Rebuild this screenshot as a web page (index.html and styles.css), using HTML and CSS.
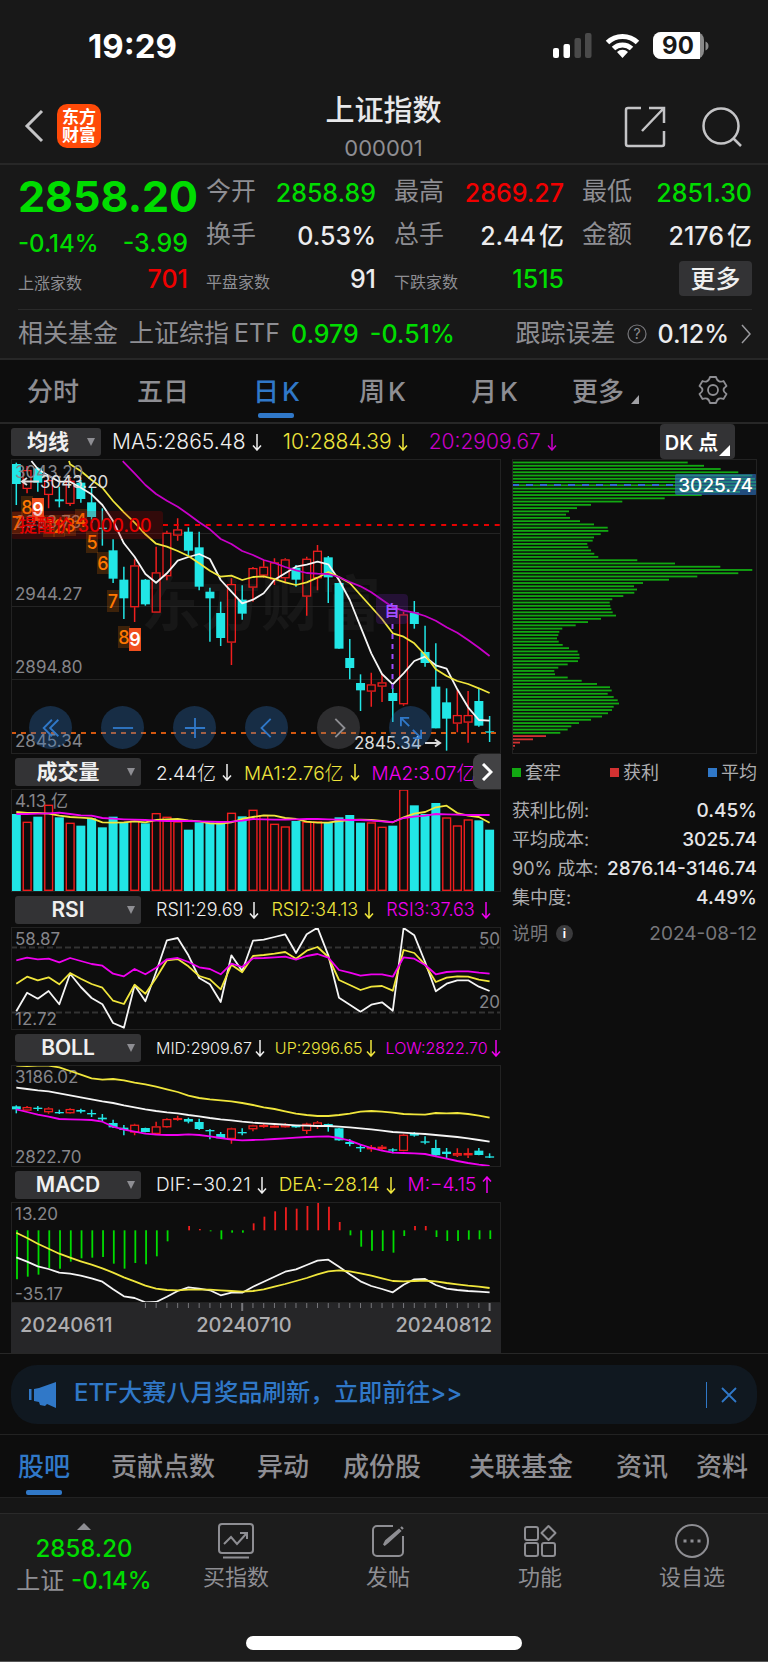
FILE: index.html
```html
<!DOCTYPE html>
<html lang="zh-CN">
<head>
  <meta charset="UTF-8">
  <meta name="viewport" content="width=device-width, initial-scale=1.0">
  <title>上证指数 000001</title>
  <link rel="stylesheet" href="styles.css">
</head>
<body>

  <svg class="defs" aria-hidden="true">
    <symbol id="down" viewBox="0 0 10 18"><path d="M5 1v16M1 12.5l4 4.5 4-4.5" fill="none" stroke="currentColor" stroke-width="1.5"/></symbol>
    <symbol id="up" viewBox="0 0 10 18"><path d="M5 17V1M1 5.5L5 1l4 4.5" fill="none" stroke="currentColor" stroke-width="1.5"/></symbol>
  </svg>

  <div class="status">
    <span class="time">19:29</span>
    <svg class="status-icons" viewBox="0 0 160 28" width="160" height="28">
      <rect x="1" y="16" width="6" height="10" rx="2" fill="#fff"/>
      <rect x="11.5" y="12" width="6.5" height="14" rx="2" fill="#fff"/>
      <rect x="22.5" y="6" width="6.5" height="20" rx="2" fill="#4a4a4a"/>
      <rect x="33" y="1" width="6.5" height="25" rx="2" fill="#4a4a4a"/>
      <g fill="none" stroke="#fff" stroke-width="5">
        <path d="M55.5 10.5a21.5 21.5 0 0 1 30 0"/>
        <path d="M61.5 16.5a13 13 0 0 1 18 0"/>
      </g>
      <path d="M70.5 26l-5.5-6a8 8 0 0 1 11 0z" fill="#fff"/>
      <rect x="101" y="0" width="51" height="27" rx="8" fill="#8a8a8a"/>
      <path d="M109 0h39v27h-39a8 8 0 0 1-8-8V8a8 8 0 0 1 8-8z" fill="#fff"/>
      <path d="M153.5 9.5c4 1 4 8 0 9z" fill="#8a8a8a"/>
      <text x="126" y="22" class="battery">90</text>
    </svg>
  </div>

  <header class="header">
    <div class="header-side">
      <button class="icon-btn" aria-label="返回">
        <svg viewBox="0 0 20 34" width="20" height="34"><path d="M18 2L3 17l15 15" fill="none" stroke="#c4c4c6" stroke-width="3"/></svg>
      </button>
      <a class="logo" href="#">东方<br>财富</a>
    </div>
    <div class="header-title">
      <h1>上证指数</h1>
      <p>000001</p>
    </div>
    <div class="header-side header-right">
      <button class="icon-btn" aria-label="分享">
        <svg viewBox="0 0 42 42" width="42" height="42" fill="none" stroke="#c4c4c6" stroke-width="2.5"><path d="M17 2H4a2 2 0 0 0-2 2v34a2 2 0 0 0 2 2h34a2 2 0 0 0 2-2V25M25 2h15v15M40 2L18 25"/></svg>
      </button>
      <button class="icon-btn" aria-label="搜索">
        <svg viewBox="0 0 42 42" width="42" height="42" fill="none" stroke="#c4c4c6" stroke-width="2.5"><circle cx="20" cy="20" r="17.5"/><path d="M32 32l8 8"/></svg>
      </button>
    </div>
  </header>

  <section class="quote">
    <div class="quote-grid">
      <div class="quote-main">
        <strong class="price green">2858.20</strong>
        <div class="change green"><span class="pct">-0.14%</span><span>-3.99</span></div>
        <div class="cell small"><span>上涨家数</span><b class="red">701</b></div>
      </div>
      <div class="quote-col">
        <div class="cell"><span>今开</span><b class="green">2858.89</b></div>
        <div class="cell"><span>换手</span><b>0.53%</b></div>
        <div class="cell small"><span>平盘家数</span><b>91</b></div>
      </div>
      <div class="quote-col">
        <div class="cell"><span>最高</span><b class="red">2869.27</b></div>
        <div class="cell"><span>总手</span><b>2.44<i>亿</i></b></div>
        <div class="cell small"><span>下跌家数</span><b class="green">1515</b></div>
      </div>
      <div class="quote-col">
        <div class="cell"><span>最低</span><b class="green">2851.30</b></div>
        <div class="cell"><span>金额</span><b>2176<i>亿</i></b></div>
        <div class="cell cell-more"><button class="more">更多</button></div>
      </div>
    </div>
    <a class="fund" href="#">
      <span>相关基金</span>
      <span>上证综指<i>ETF</i></span>
      <b class="green">0.979</b>
      <b class="green">-0.51%</b>
      <span class="fund-err">跟踪误差</span>
      <svg viewBox="0 0 20 20" width="20" height="20"><circle cx="10" cy="10" r="9" fill="none" stroke="#77777b" stroke-width="1.2"/><text x="10" y="15" class="q">?</text></svg>
      <b>0.12%</b>
      <svg viewBox="0 0 12 20" width="12" height="20"><path d="M2 1l8 9-8 9" fill="none" stroke="#9a9a9e" stroke-width="1.5"/></svg>
    </a>
  </section>

  <nav class="periods">
    <button>分时</button>
    <button>五日</button>
    <button class="active">日<i>K</i></button>
    <button>周<i>K</i></button>
    <button>月<i>K</i></button>
    <button class="has-corner">更多</button>
    <button aria-label="设置">
      <svg viewBox="0 0 30 30" width="30" height="30" fill="none" stroke="#8e8e93" stroke-width="1.8"><path d="M12 2h6q1 4 3.500 4.500 2 .5 4-.5l3 5q-3 2-3 4t3 4l-3 5q-2-1-4-.5Q19 24 18 28h-6q-1-4-3.500-4.500-2-.5-4 .5l-3-5q3-2 3-4t-3-4l3-5q2 1 4 .5Q11 6 12 2z" stroke-linejoin="round"/><circle cx="15" cy="15" r="5"/></svg>
    </button>
  </nav>

  <main class="board">
    <div class="ma-row">
      <button class="pick pick-short">均线</button>
      <span>MA5:2865.48<svg class="arrow"><use href="#down"/></svg></span>
      <span class="yellow">10:2884.39<svg class="arrow"><use href="#down"/></svg></span>
      <span class="purple">20:2909.67<svg class="arrow"><use href="#down"/></svg></span>
      <button class="dk">DK <i>点</i></button>
    </div>

    <div class="charts">
      <div class="kline">
        <svg id="kline" class="chart" viewBox="0 0 490 295">
          <text class="watermark" x="250" y="167">东方财富</text>
          <path class="grid" d="M0 74.5h490M0 147.5h490M0 220.5h490"/>
          <g class="plot"></g>
          <g class="axis">
            <text x="4" y="19">3043.20</text>
            <text x="4" y="69">2993.73</text>
            <text x="4" y="141">2944.27</text>
            <text x="4" y="214">2894.80</text>
            <text x="4" y="288">2845.34</text>
          </g>
          <g class="badges"></g>
          <rect x="0" y="52" width="152" height="28" rx="3" fill="#c80000" fill-opacity=".2"/>
          <text class="alert" x="8" y="73">提醒价 3000.00</text>
          <path d="M152 66h338" stroke="#e60000" stroke-width="2" stroke-dasharray="5 5.7"/>
          <path d="M0 274h490" stroke="#d2570f" stroke-width="2" stroke-dasharray="5 5"/>
          <g class="mark">
            <path d="M11 22.5h17M16 19l-5 3.5 5 3.5"/>
            <text x="29" y="29">3043.20</text>
            <path d="M414 284h14M424 280.5l5 3.5-5 3.5"/>
            <text x="343" y="290">2845.34</text>
          </g>
          <rect x="365" y="135" width="32" height="30" rx="4" fill="#6a1fb0" fill-opacity=".25"/>
          <path d="M381.5 165v68" stroke="#9d4dff" stroke-width="2" stroke-dasharray="5 5"/>
          <text class="self" x="381" y="157">自</text>
        </svg>
        <div class="tools">
          <button aria-label="最左"><svg viewBox="0 0 24 24"><path d="M13 3l-9 9 9 9M20 3l-9 9 9 9"/></svg></button>
          <button aria-label="缩小"><svg viewBox="0 0 24 24"><path d="M1 12h22"/></svg></button>
          <button aria-label="放大"><svg viewBox="0 0 24 24"><path d="M1 12h22M12 1v22"/></svg></button>
          <button aria-label="左移"><svg viewBox="0 0 24 24"><path d="M16 2L6 12l10 10"/></svg></button>
          <button class="off" aria-label="右移"><svg viewBox="0 0 24 24"><path d="M8 2l10 10L8 22"/></svg></button>
          <button aria-label="全屏"><svg viewBox="0 0 24 24"><path d="M1 10V1h9M1 1l9 9M23 14v9h-9M23 23l-9-9"/></svg></button>
        </div>
      </div>

      <div class="sub-head">
        <button class="pick">成交量</button>
        <span>2.44亿<svg class="arrow"><use href="#down"/></svg></span>
        <span class="yellow">MA1:2.76亿<svg class="arrow"><use href="#down"/></svg></span>
        <span class="magenta">MA2:3.07亿</span>
        <button class="next" aria-label="更多指标"><svg viewBox="0 0 12 18" width="12" height="18"><path d="M2 1l8 8-8 8" fill="none" stroke="#fff" stroke-width="3"/></svg></button>
      </div>
      <svg id="volume" class="chart" viewBox="0 0 490 103">
        <g class="axis"><text x="4" y="18">4.13 亿</text></g>
        <g class="plot"></g>
      </svg>

      <div class="sub-head sub-rsi">
        <button class="pick">RSI</button>
        <span>RSI1:29.69<svg class="arrow"><use href="#down"/></svg></span>
        <span class="yellow">RSI2:34.13<svg class="arrow"><use href="#down"/></svg></span>
        <span class="magenta">RSI3:37.63<svg class="arrow"><use href="#down"/></svg></span>
      </div>
      <svg id="rsi" class="chart" viewBox="0 0 490 103">
        <path class="grid-dash" d="M0 20.5h490M0 85.5h490"/>
        <g class="axis">
          <text x="4" y="18">58.87</text>
          <text x="4" y="98">12.72</text>
          <text class="end" x="489" y="18">50</text>
          <text class="end" x="489" y="81">20</text>
        </g>
        <g class="plot"></g>
      </svg>

      <div class="sub-head sub-boll">
        <button class="pick">BOLL</button>
        <span>MID:2909.67<svg class="arrow"><use href="#down"/></svg></span>
        <span class="yellow">UP:2996.65<svg class="arrow"><use href="#down"/></svg></span>
        <span class="magenta">LOW:2822.70<svg class="arrow"><use href="#down"/></svg></span>
      </div>
      <svg id="boll" class="chart" viewBox="0 0 490 102">
        <g class="axis"><text x="4" y="18">3186.02</text><text x="4" y="98">2822.70</text></g>
        <g class="plot"></g>
      </svg>

      <div class="sub-head">
        <button class="pick">MACD</button>
        <span>DIF:−30.21<svg class="arrow"><use href="#down"/></svg></span>
        <span class="yellow">DEA:−28.14<svg class="arrow"><use href="#down"/></svg></span>
        <span class="magenta">M:−4.15<svg class="arrow"><use href="#up"/></svg></span>
      </div>
      <svg id="macd" class="chart" viewBox="0 0 490 101">
        <g class="axis"><text x="4" y="18">13.20</text><text x="4" y="98">-35.17</text></g>
        <g class="plot"></g>
      </svg>
      <div class="dates">
        <svg id="ticks" viewBox="0 0 490 9"><g class="plot"></g></svg>
        <div class="dates-row"><span>20240611</span><span>20240710</span><span>20240812</span></div>
      </div>
    </div>

    <aside>
      <svg id="chips" class="chart" viewBox="0 0 245 295">
        <g class="plot"></g>
        <path d="M0 26h163" stroke="#2f6fd0" stroke-width="2" stroke-dasharray="7 7"/>
        <rect x="163" y="15" width="82" height="21" rx="2" fill="#2f76c8" fill-opacity=".6"/>
        <text class="avg" x="241" y="33">3025.74</text>
      </svg>
      <ul class="legend">
        <li class="l-green">套牢</li>
        <li class="l-red">获利</li>
        <li class="l-blue">平均</li>
      </ul>
      <dl class="costs">
        <div><dt>获利比例:</dt><dd>0.45%</dd></div>
        <div><dt>平均成本:</dt><dd>3025.74</dd></div>
        <div><dt>90% 成本:</dt><dd>2876.14-3146.74</dd></div>
        <div><dt>集中度:</dt><dd>4.49%</dd></div>
      </dl>
      <div class="note"><span>说明</span><button class="info" aria-label="说明">i</button><time>2024-08-12</time></div>
    </aside>
  </main>

  <div class="promo-wrap">
    <div class="promo">
      <svg viewBox="0 0 28 26" width="28" height="26" fill="#3078c8"><rect x="0" y="7" width="2.5" height="11"/><path d="M5 7l5-1 17-6v26l-9-4-2 2-5-1-1-3-5-1z"/></svg>
      <a href="#">ETF<i>大赛八月奖品刷新，立即前往&gt;&gt;</i></a>
      <button aria-label="关闭"><svg viewBox="0 0 16 16" width="16" height="16"><path d="M1 1l14 14M15 1L1 15" stroke="#3078c8" stroke-width="1.8"/></svg></button>
    </div>
  </div>

  <nav class="topics">
    <a class="active" href="#">股吧</a>
    <a href="#">贡献点数</a>
    <a href="#">异动</a>
    <a href="#">成份股</a>
    <a href="#">关联基金</a>
    <a href="#">资讯</a>
    <a href="#">资料</a>
  </nav>

  <footer class="tabbar">
    <div class="tabbar-row">
      <button class="index">
        <span class="tri"></span>
        <span class="green">2858.20</span>
        <span>上证 <b class="green">-0.14%</b></span>
      </button>
      <button>
        <svg viewBox="0 0 36 36"><rect x="1" y="1" width="34" height="29" rx="3"/><path d="M5 34.5h26M6 21l7-7 6 7 9-10M22 10h7v6"/></svg>
        <span>买指数</span>
      </button>
      <button>
        <svg viewBox="0 0 36 36"><path d="M23 3H7a4 4 0 0 0-4 4v22a4 4 0 0 0 4 4h22a4 4 0 0 0 4-4V13"/><path d="M14 22l2-4L29 7l1 1-12 11zM31 4l2 2" stroke-width="2.2"/></svg>
        <span>发帖</span>
      </button>
      <button>
        <svg viewBox="0 0 36 36"><rect x="3" y="4" width="13" height="13" rx="2"/><rect x="3" y="20" width="13" height="13" rx="2"/><rect x="20" y="20" width="13" height="13" rx="2"/><path d="M26.5 3l7 7-7 7-7-7z" stroke-linejoin="round"/></svg>
        <span>功能</span>
      </button>
      <button>
        <svg viewBox="0 0 36 36"><circle cx="18" cy="18" r="16"/><path d="M9.5 18h3M16.5 18h3M23.5 18h3" stroke-width="3"/></svg>
        <span>设自选</span>
      </button>
    </div>
    <div class="home-bar"></div>
  </footer>

  <script src="script.js"></script>
</body>
</html>
```
FILE: styles.css
```css
* {
  box-sizing: border-box;
}
body {
  margin: 0;
  background: #0d0d0d;
  color: #8e8e93;
  font-family: Inter, "Noto Sans CJK SC", sans-serif;
}
button {
  padding: 0;
  border: none;
  background: none;
  color: inherit;
  font: inherit;
  cursor: pointer;
}
a {
  color: inherit;
  text-decoration: none;
}
i {
  font-style: normal;
}
b {
  font-weight: 500;
}
h1, p, ul, dl, dd {
  margin: 0;
  padding: 0;
}
svg {
  display: block;
  flex: none;
}
.defs {
  position: absolute;
  width: 0;
  height: 0;
}
.green { color: #00dc00; }
.red { color: #f00000; }
.yellow { color: #f0e63c; }
.purple { color: #c800c8; }
.magenta { color: #f000f0; }

/* status bar */
.status {
  display: flex;
  align-items: center;
  justify-content: space-between;
  height: 91px;
  padding: 0 56px 0 88px;
  background: #181818;
}
.time {
  color: #fff;
  font-size: 33px;
  font-weight: 700;
}
.battery {
  fill: #181818;
  font-size: 24px;
  font-weight: 700;
  text-anchor: middle;
}

/* header */
.header {
  display: grid;
  grid-template-columns: 1fr auto 1fr;
  align-items: center;
  height: 74px;
  padding: 0 25px 8px 24px;
  background: #181818;
  border-bottom: 2px solid #272727;
}
.header-side {
  display: flex;
  align-items: center;
  gap: 13px;
  padding-bottom: 8px;
}
.header-right {
  justify-content: flex-end;
  gap: 35px;
  padding-bottom: 6px;
}
.logo {
  width: 44px;
  height: 44px;
  padding-top: 4px;
  border-radius: 10px;
  background: #ff4a08;
  color: #fff;
  font-size: 17px;
  font-weight: 700;
  line-height: 18px;
  text-align: center;
}
.header-title {
  padding-bottom: 4px;
  text-align: center;
}
.header-title h1 {
  color: #e8e8ea;
  font-size: 29px;
  font-weight: 500;
  line-height: 40px;
}
.header-title p {
  font-size: 22px;
  line-height: 34px;
}

/* quote */
.quote {
  padding: 0 16px 0 18px;
  background: #181818;
  border-bottom: 2px solid #272727;
}
.quote-grid {
  display: grid;
  grid-template-columns: repeat(4, minmax(0, 1fr));
  column-gap: 18px;
  padding: 6px 0 9px;
  border-bottom: 1px solid #2a2a2a;
}
.price {
  display: block;
  font-size: 43px;
  font-weight: 700;
  line-height: 50px;
}
.change {
  display: flex;
  align-items: center;
  justify-content: space-between;
  height: 44px;
  font-size: 25px;
  font-weight: 500;
}
.change .pct {
  font-size: 24px;
}
.cell {
  display: flex;
  align-items: center;
  justify-content: space-between;
  height: 43px;
  font-size: 25px;
  line-height: 36px;
  white-space: nowrap;
}
.cell span {
  padding-bottom: 3px;
}
.cell b {
  color: #ececee;
}
.cell b i {
  margin-left: 3px;
}
.cell b.green { color: #00dc00; }
.cell b.red { color: #f00000; }
.cell.small span {
  padding: 7px 0 0;
  font-size: 16px;
}
.quote-main .cell {
  height: 28px;
}
.cell-more {
  justify-content: flex-end;
}
.more {
  width: 73px;
  height: 35px;
  border-radius: 4px;
  background: #333335;
  color: #f0f0f0;
  font-weight: 500;
  line-height: 34px;
}
.fund {
  display: flex;
  align-items: center;
  gap: 11px;
  height: 48px;
  font-size: 25px;
  line-height: 36px;
  white-space: nowrap;
}
.fund span {
  padding-bottom: 2px;
}
.fund i {
  margin-left: 5px;
}
.fund b:not(.green) {
  color: #ececee;
}
.fund-err {
  margin-left: auto;
}
.q {
  fill: #8e8e93;
  font-size: 14px;
  text-anchor: middle;
}

/* period tabs */
.periods {
  display: grid;
  grid-template-columns: 110fr 116fr 106fr 112fr 101fr 126fr 30fr;
  align-items: center;
  height: 64px;
  padding: 0 40px 0 27px;
  border-bottom: 2px solid #272727;
  font-size: 26px;
}
.periods button {
  position: relative;
  justify-self: start;
  height: 62px;
  padding-bottom: 3px;
  font-weight: 500;
}
.periods i {
  margin-left: 3px;
}
.periods .active,
.topics .active {
  color: #3078c8;
}
.periods .active::after,
.topics .active::after {
  content: "";
  position: absolute;
  left: 50%;
  bottom: 4px;
  width: 36px;
  height: 5px;
  margin-left: -18px;
  border-radius: 2px;
  background: #3078c8;
}
.has-corner::after {
  content: "";
  position: absolute;
  right: -15px;
  bottom: 18px;
  border-left: 8px solid transparent;
  border-bottom: 9px solid #a0a0a4;
}

/* chart board */
.board {
  display: grid;
  grid-template-columns: minmax(0, 2fr) minmax(0, 1fr);
  column-gap: 11px;
  padding: 0 11px;
  border-bottom: 1px solid #272727;
}
.ma-row {
  grid-column: 1 / -1;
  display: flex;
  align-items: center;
  height: 35px;
  gap: 21px;
  color: #f0f0f0;
  font-size: 21px;
  font-weight: 300;
  white-space: nowrap;
}
.ma-row > span,
.sub-head > span {
  display: flex;
  align-items: center;
  gap: 6px;
}
.ma-row .pick {
  margin-right: -10px;
}
.arrow {
  width: 10px;
  height: 18px;
}
.pick {
  position: relative;
  flex: none;
  width: 126px;
  height: 28px;
  padding-right: 20px;
  border-radius: 3px;
  background: #333335;
  color: #f0f0f0;
  font-size: 21px;
  font-weight: 600;
  line-height: 28px;
}
.pick::after {
  content: "";
  position: absolute;
  right: 6px;
  top: 10px;
  border: 4px solid transparent;
  border-top: 8px solid #8e8e93;
  border-bottom: none;
}
.pick-short {
  width: 90px;
  padding-right: 16px;
}
.dk {
  position: relative;
  width: 75px;
  height: 35px;
  margin: 0 22px 0 auto;
  padding-right: 12px;
  border-radius: 4px;
  background: #333335;
  color: #fff;
  font-size: 20px;
  font-weight: 600;
}
.dk::after {
  content: "";
  position: absolute;
  right: 5px;
  bottom: 3px;
  border-left: 11px solid transparent;
  border-bottom: 11px solid #fff;
}
.chart {
  width: 100%;
  height: auto;
  outline: 1px solid #222;
  outline-offset: -1px;
}
.kline {
  position: relative;
}
.tools {
  position: absolute;
  left: 18px;
  bottom: 5px;
  display: flex;
  gap: 29px;
}
.tools button {
  display: grid;
  place-items: center;
  width: 43px;
  height: 43px;
  border-radius: 50%;
  background: rgba(48, 120, 200, 0.3);
}
.tools svg {
  width: 22px;
  height: 22px;
  fill: none;
  stroke: #3078c8;
  stroke-width: 2;
}
.tools .off {
  background: rgba(120, 120, 125, 0.3);
}
.tools .off svg {
  stroke: #8e8e93;
}
.sub-head {
  position: relative;
  display: flex;
  align-items: center;
  gap: 12px;
  height: 35px;
  padding-left: 4px;
  color: #f0f0f0;
  font-size: 19px;
  font-weight: 300;
  white-space: nowrap;
}
.sub-head .pick {
  margin-right: 3px;
}
.sub-rsi {
  font-size: 18px;
}
.sub-boll {
  gap: 10px;
  font-size: 16px;
}
.sub-boll > span {
  gap: 3px;
}
.sub-boll .pick {
  margin-right: 5px;
}
.next {
  position: absolute;
  right: 0;
  top: 0;
  display: grid;
  place-items: center;
  width: 28px;
  height: 35px;
  border-radius: 8px 0 0 8px;
  background: rgba(72, 72, 74, 0.9);
}
.watermark {
  fill: #171717;
  font-size: 60px;
  font-weight: 700;
  text-anchor: middle;
}
.grid {
  stroke: #242424;
}
.grid-dash {
  stroke: #333;
  stroke-width: 2;
  stroke-dasharray: 6 3;
}
.axis text {
  fill: #85858a;
  font-size: 17px;
}
.axis .end {
  text-anchor: end;
}
.alert {
  fill: #e60000;
  font-size: 18px;
  font-weight: 500;
}
.mark text {
  fill: #dcdcdc;
  font-size: 17px;
}
.mark path {
  fill: none;
  stroke: #dcdcdc;
  stroke-width: 2;
}
.self {
  fill: #a050ff;
  font-size: 15px;
  font-weight: 700;
  text-anchor: middle;
}
.badges text {
  fill: #ff7800;
  font-size: 18px;
  font-weight: 500;
  text-anchor: middle;
}
.badges .nine {
  fill: #fff;
  font-weight: 600;
}
.dates {
  height: 50px;
  background: #262628;
}
.dates-row {
  display: flex;
  justify-content: space-between;
  padding: 0 9px;
  color: #adadb0;
  font-size: 20px;
  font-weight: 500;
  line-height: 26px;
}
.dates-row span:nth-child(2) {
  margin-right: 20px;
}

/* chip distribution */
.avg {
  fill: #fff;
  font-size: 19px;
  font-weight: 500;
  text-anchor: end;
}
.legend {
  display: flex;
  justify-content: space-between;
  padding-top: 5px;
  list-style: none;
  color: #adadb0;
  font-size: 18px;
  line-height: 28px;
}
.legend li::before {
  content: "";
  display: inline-block;
  width: 9px;
  height: 9px;
  margin-right: 4px;
  vertical-align: 2px;
}
.l-green::before { background: #12a812; }
.l-red::before { background: #d23232; }
.l-blue::before { background: #3078c8; }
.costs {
  padding-top: 9px;
  font-size: 18px;
  line-height: 29px;
}
.costs div {
  display: flex;
  justify-content: space-between;
  white-space: nowrap;
}
.costs dt {
  color: #adadb0;
}
.costs dd {
  color: #e6e6e8;
  font-size: 19px;
  font-weight: 500;
}
.note {
  display: flex;
  align-items: center;
  gap: 8px;
  padding-top: 7px;
  color: #77777b;
  font-size: 18px;
  line-height: 29px;
}
.note time {
  margin-left: auto;
  font-size: 19px;
}
.info {
  width: 17px;
  height: 17px;
  border-radius: 50%;
  background: #3a3a3c;
  color: #fff;
  font-size: 12px;
  font-weight: 700;
  line-height: 17px;
}

/* promo */
.promo-wrap {
  padding: 11px 11px 10px;
  border-bottom: 1px solid #222;
}
.promo {
  display: flex;
  align-items: center;
  gap: 17px;
  height: 59px;
  padding: 0 20px 0 18px;
  border-radius: 26px;
  background: #101820;
  color: #3078c8;
  font-size: 24px;
  font-weight: 500;
  line-height: 56px;
}
.promo a {
  padding-bottom: 3px;
}
.promo button {
  margin-left: auto;
  padding: 5px 0 5px 14px;
  border-left: 1px solid #3078c8;
}

/* topic tabs */
.topics {
  display: grid;
  grid-template-columns: 93fr 146fr 86fr 126fr 147fr 80fr 53fr;
  height: 63px;
  padding: 0 19px 0 18px;
  border-bottom: 1px solid #222;
  font-size: 26px;
  font-weight: 500;
  line-height: 64px;
  white-space: nowrap;
}
.topics a {
  position: relative;
  justify-self: start;
}

/* bottom bar */
.tabbar {
  padding-bottom: 11px;
  border-top: 15px solid #161616;
  border-bottom: 1px solid #555;
  background: #1c1c1c;
}
.tabbar-row {
  display: grid;
  grid-template-columns: repeat(5, 1fr);
  height: 123px;
  padding: 9px 0 0 8px;
  border-top: 1px solid #2a2a2a;
}
.tabbar button {
  display: flex;
  flex-direction: column;
  align-items: center;
  font-size: 22px;
  line-height: 32px;
  white-space: nowrap;
}
.tabbar svg {
  width: 36px;
  height: 36px;
  margin-bottom: 2px;
  fill: none;
  stroke: #8e8e93;
  stroke-width: 2;
}
.tabbar .index {
  font-size: 24px;
}
.index .green {
  font-weight: 500;
}
.tri {
  margin-bottom: 3px;
  border: 7px solid transparent;
  border-top: none;
  border-bottom: 7px solid #8e8e93;
}
.home-bar {
  width: 36%;
  height: 14px;
  margin: 0 auto;
  border-radius: 7px;
  background: #fff;
}
```
FILE: script.js
```js
const CYAN = "#21e6e6", RED = "#f01e1e", WHITE = "#f5f5f5", YELLOW = "#f0e63c", PURPLE = "#c800c8", MAGENTA = "#f000f0";
const STEP = 10.757, FIRST = 5.3;

// rows are stored on a 3x grid; top is where the panel starts on that grid
const yAt = (v, top) => (v - top) / 3;
const xAt = (i) => FIRST + i * STEP;

function plot(id, html) {
  document.querySelector("#" + id + " .plot").innerHTML += html;
}

function line(values, color, top, start = 0, width = 1.8) {
  const pts = values.map((v, k) => {
    const i = k === 0 ? start : Math.floor(start) + k;
    return xAt(i).toFixed(1) + "," + yAt(v, top).toFixed(1);
  });
  return `<polyline points="${pts.join(" ")}" fill="none" stroke="${color}" stroke-width="${width}" stroke-linejoin="round"/>`;
}

// [high, body top, body bottom, low]
function candles(rows, rising, top) {
  return rows.map(([h, t, b, l], i) => {
    const x = xAt(i), up = rising.includes(i), c = up ? RED : CYAN;
    const [H, T, B, L] = [h, t, b, l].map((v) => yAt(v, top));
    if (!up) {
      return `<path d="M${x} ${H}V${L}" stroke="${c}" stroke-width="1.5"/><rect x="${x - 4.5}" y="${T}" width="9" height="${Math.max(B - T, 1.3)}" fill="${c}"/>`;
    }
    return `<path d="M${x} ${H}V${T}M${x} ${B}V${L}" stroke="${c}" stroke-width="1.5"/><rect x="${x - 3.9}" y="${T + .6}" width="7.8" height="${Math.max(B - T - 1.2, .6)}" fill="none" stroke="${c}" stroke-width="1.3"/>`;
  }).join("");
}

const rising = [1, 3, 5, 11, 13, 14, 15, 20, 22, 23, 24, 25, 27, 28, 33, 34, 36, 41, 42];

// K line
const days = [
  [23,27,87,150],[33,45,102,115],[37,40,83,110],[62,75,120,160],[95,133,139,157],[70,77,147,153],[75,83,132,143],
  [95,142,186,203],[160,218,222,272],[253,286,371,384],[335,374,430,492],[313,331,457,501],[372,374,448,452],
  [275,352,473,473],[227,233,364,376],[190,223,242,257],[217,230,287,302],[230,277,395,406],[398,410,430,560],
  [440,474,549,573],[370,387,563,630],[391,434,476,494],[336,339,398,440],[315,335,362,368],[310,322,374,390],
  [310,313,370,385],[330,338,374,395],[305,311,425,482],[270,287,370,406],[303,307,367,444],[383,384,581,581],
  [552,609,639,673],[658,684,706,768],[653,688,710,755],[655,682,695,741],[700,714,738,801],[470,478,748,752],
  [438,472,507,521],[512,591,624,635],[565,695,820,820],[700,742,791,887],[705,780,806,832],[708,780,803,863],
  [701,738,812,815],[783,829,833,861]
];
const ma5 = [18,42,62,80,80,98,118,150,198,265,305,357,383,355,317,306,297,312,375,410,445,434,415,374,355,335,329,320,328,375,435,515,595,657,688,655,618,605,631,641,703,757,795,797];
const ma10 = [18,28,48,75,98,138,172,203,238,266,275,288,303,325,347,365,362,375,366,364,372,382,390,382,368,351,366,384,420,456,492,535,545,565,600,643,663,678,687,700,714];
const ma20 = [18,22,55,90,117,137,155,178,202,223,252,267,288,300,315,324,336,346,354,356,357,366,381,394,412,434,457,467,473,483,497,517,533,555,578,603];
plot("kline", candles(days, rising, 12) + line(ma5, WHITE, 12, 1.4) + line(ma10, YELLOW, 12, 4.9) + line(ma20, PURPLE, 12, 9.9));

const badges = [[6,64,7],[16,48,8],[38,67,1],[48,67,2],[59,66,3],[70,61,4],[81,83,5],[92,104,6],[102,142,7],[113,178,8],[27,50,9],[124,180,9]];
document.querySelector("#kline .badges").innerHTML = badges.map(([x, y, n]) => {
  const nine = n === 9;
  return `<rect x="${x - 6}" y="${y - 11}" width="12" height="${nine ? 23 : 22}" fill="${nine ? "#f0501e" : "#ff7800"}" fill-opacity="${nine ? 1 : .2}"/><text x="${x}" y="${y + 7}" class="${nine ? "nine" : ""}">${n}</text>`;
}).join("");

// volume
const volUp = [1,3,5,11,13,14,15,20,22,23,24,25,27,28,33,34,36,40,41,42];
const vol = [178,203,186,152,188,206,213,191,218,186,202,200,206,177,188,202,225,203,203,203,176,185,167,183,209,217,199,203,202,202,188,181,204,205,218,213,106,152,178,145,190,214,196,197,225];
const volMa1 = [172,175,175,177,183,187,189,191,203,204,203,200,203,196,194,193,197,200,206,207,203,193,187,182,183,190,193,201,204,204,199,196,195,196,199,203,188,177,172,158,153,175,183,187,204];
const volMa2 = [178,178,177,176,174,178,182,183,190,192,194,195,196,198,199,199,199,200,201,202,201,198,193,194,195,195,194,193,193,194,195,196,196,198,200,202,190,186,183,178,179,180,181,181,181];
plot("volume", vol.map((v, i) => {
  const y = yAt(v, 103), x = xAt(i);
  return volUp.includes(i)
    ? `<rect x="${x - 3.8}" y="${y}" width="7.8" height="${101.3 - y}" fill="none" stroke="${RED}" stroke-width="1.4"/>`
    : `<rect x="${x - 4.5}" y="${y}" width="9" height="${102 - y}" fill="${CYAN}"/>`;
}).join("") + line(volMa1, YELLOW, 103) + line(volMa2, MAGENTA, 103));

// RSI
const rsi1 = [768,712,730,707,747,655,695,728,747,803,817,690,738,650,555,548,600,668,687,740,600,647,556,553,545,537,593,537,517,600,727,748,769,748,741,766,518,540,620,708,685,675,675,694,707];
const rsi2 = [685,664,675,666,687,653,670,686,697,736,746,688,715,668,615,611,633,662,672,702,628,651,602,599,595,590,610,586,575,605,674,689,704,694,692,706,584,593,628,680,667,663,664,673,678];
const rsi3 = [615,607,612,610,621,608,617,626,631,655,663,641,657,637,612,608,620,636,641,657,625,635,609,608,606,604,613,602,596,607,644,652,661,657,657,664,606,610,629,657,650,648,648,652,655];
plot("rsi", line(rsi1, WHITE, 515) + line(rsi2, YELLOW, 515) + line(rsi3, MAGENTA, 515));

// BOLL
const bollDays = [
  [224,227,236,248],[226,229,240,241],[226,231,235,241],[230,233,245,249],[237,244,248,250],[233,235,248,249],[234,238,243,248],
  [237,247,251,259],[250,261,266,274],[267,277,290,292],[283,291,298,314],[279,282,306,314],[291,292,304,305],[273,287,310,312],
  [263,265,290,291],[255,262,268,270],[261,265,273,278],[264,274,295,298],[295,298,302,326],[304,310,323,325],[291,293,325,339],
  [293,304,308,314],[282,284,296,302],[280,283,289,291],[281,285,291,292],[278,281,290,291],[283,286,290,291],[276,279,301,310],
  [271,275,287,295],[279,280,287,303],[292,293,329,330],[325,334,340,347],[343,349,353,364],[343,349,356,363],[343,348,355,358],
  [353,356,359,368],[309,312,361,362],[304,310,315,318],[317,332,336,341],[327,352,374,375],[352,363,370,384],[353,367,375,379],
  [353,367,374,382],[352,360,373,374],[368,377,381,382]
];
const bollUp = [105,106,105,105,110,121,132,143,147,145,149,156,161,168,176,184,195,202,206,209,212,217,223,230,235,242,249,253,256,256,253,249,243,241,243,246,250,251,252,247,248,247,250,255,261];
const bollMid = [171,175,179,182,188,194,200,206,212,217,224,230,236,241,245,248,253,257,262,266,269,273,276,278,280,282,284,285,286,286,288,290,293,296,300,304,306,308,310,313,316,319,323,328,333];
const bollLow = [236,244,252,258,265,266,267,268,273,288,297,303,309,312,313,313,311,313,317,322,327,329,328,327,325,323,321,319,318,317,322,330,342,352,360,366,367,368,370,377,384,391,397,402,406];
plot("boll", candles(bollDays, rising, 103) + line(bollUp, YELLOW, 103) + line(bollMid, WHITE, 103) + line(bollLow, MAGENTA, 103));

// MACD
const bars = [748,740,734,714,716,695,685,683,681,701,716,699,703,679,634,601,588,597,604,628,608,608,580,560,544,532,536,528,519,530,576,616,650,662,663,668,618,588,588,621,633,633,629,628,627];
const dif = [682,695,709,717,728,731,737,745,755,778,799,804,817,816,800,783,772,776,781,796,788,788,770,755,740,725,718,705,692,689,710,733,754,768,777,787,764,748,747,765,776,780,783,785,787];
const dea = [608,624,641,656,671,683,694,704,715,728,742,754,767,776,780,781,779,779,779,781,783,785,783,778,770,762,753,744,733,724,721,724,730,737,745,753,754,753,752,754,759,763,767,770,774];
plot("macd", bars.map((v, i) =>
  `<path d="M${xAt(i) + .7} ${yAt(601, 516)}V${yAt(v, 516)}" stroke="${v < 601 ? RED : "#00dc00"}" stroke-width="1.8"/>`
).join("") + line(dif, WHITE, 516) + line(dea, YELLOW, 516));

let ticks = "";
for (let i = 12; i < 45; i++) {
  const long = i === 21 || i === 44;
  ticks += `<path d="M${xAt(i)} 0V${long ? 8 : 5}" stroke="#77777b" stroke-width="${long ? 2 : 1}"/>`;
}
plot("ticks", ticks);

// chip distribution
const chips = [563,612,662,715,757,765,768,768,768,720,605,494,367,273,231,207,198,210,240,282,323,325,302,282,278,262,265,273,283,295,412,525,661,757,715,592,507,429,402,411,403,370,337,329,331,334,338,348,303,264,227,187,178,175,171,176,188,207,233,238,239,234,203,175,163,165,203,245,291,330,335,323,341,353,357,341,336,324,306,273,237,214,203,181,138,99,60,45,40];
plot("chips", chips.map((v, i) =>
  `<rect x="0" y="${(2.6 + i * 3.257).toFixed(2)}" width="${((v - 36) / 3).toFixed(1)}" height="1.8" fill="${i > 83 ? "#d23232" : "#12a812"}"/>`
).join(""));
```
